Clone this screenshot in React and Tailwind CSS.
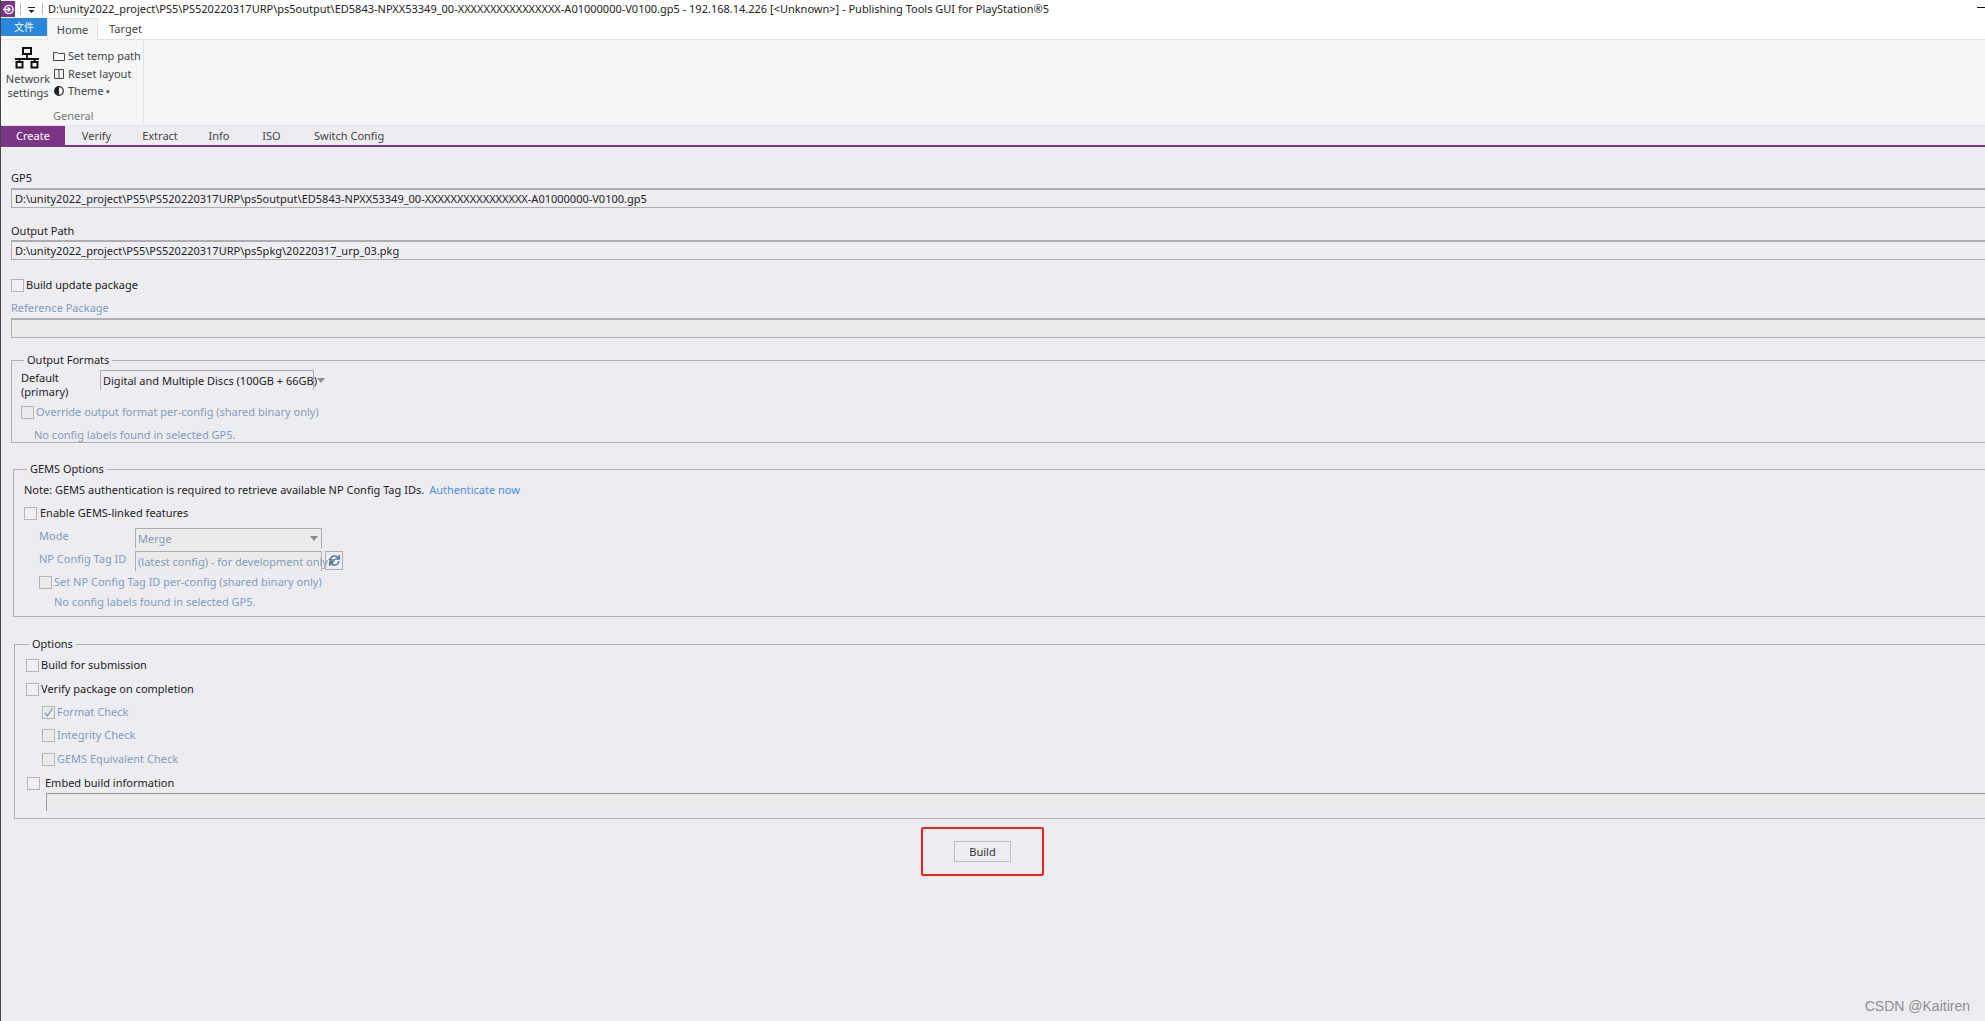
import React from "react";
import { FaSync } from "react-icons/fa";

const font = { };
const dim = "text-[#7f9cc0]";

function Check({ label, checked, disabled, className = "", gap = "gap-[2px]" }) {
  return (
    <div className={`flex items-center h-[14px] ${gap} ${className}`}>
      <span className={`w-[13px] h-[13px] shrink-0 border flex items-center justify-center ${disabled ? "border-[#b4b4b4] bg-[#ebebeb]" : "border-[#b4b4b4] bg-[#f0eff4]"}`}>
        {checked && (
          <svg viewBox="0 0 13 13" className="w-[13px] h-[13px]"><path d="M2.5 7 L5.2 10.5 L11 1.5" fill="none" stroke="#6f93c4" strokeWidth="1.4" /></svg>
        )}
      </span>
      <span className={disabled ? dim : "text-[#222]"}>{label}</span>
    </div>
  );
}

function PathBox({ value, disabled, className = "" }) {
  return (
    <div className={`h-[20px] -mr-[10px] border border-[#aeaeae] border-t-2 flex items-center pl-[3px] whitespace-nowrap ${disabled ? "bg-[#ebebeb] border-[#9a9a9a]" : "bg-[#eeedf2]"} ${className}`}>
      {value}
    </div>
  );
}

function Group({ title, className = "", children }) {
  return (
    <fieldset className={`border border-[#b0b0b0] -mr-[10px] min-w-0 ${className}`}>
      <legend className="ml-[3px] px-[3px] text-[#222] leading-[14px]">{title}</legend>
      {children}
    </fieldset>
  );
}

function Select({ value, disabled, className = "" }) {
  return (
    <div className={`h-[20px] border-t border-l border-r border-[#adadad] flex items-center justify-between pl-[2px] pr-[3px] ${disabled ? "bg-[#ebebeb] text-[#7f9cc0]" : "text-[#222]"} ${className}`}>
      <span className="whitespace-nowrap">{value}</span>
      <svg viewBox="0 0 8 5" className="w-[8px] h-[5px] shrink-0"><path d="M0 0H8L4 5Z" fill="#8d8d8d" /></svg>
    </div>
  );
}

function NetworkIcon() {
  return (
    <svg viewBox="0 0 26 22" className="w-[26px] h-[22px]">
      <rect x="9" y="1" width="8" height="6" fill="none" stroke="#111" strokeWidth="2" />
      <path d="M13 7V11M1 12H25M5.500 12V15M20.500 12V15" stroke="#111" strokeWidth="1.800" fill="none" />
      <rect x="2.500" y="15" width="6" height="5.500" fill="none" stroke="#111" strokeWidth="2" />
      <rect x="17.500" y="15" width="6" height="5.500" fill="none" stroke="#111" strokeWidth="2" />
    </svg>
  );
}

function RibbonItem({ icon, label }) {
  return (
    <div className="h-[20px] flex items-center gap-[3px] text-[#444]">
      <span className="w-[12px] h-[12px] flex items-center justify-center">{icon}</span>
      {label}
    </div>
  );
}

export default function App() {
  return (
    <div className="w-[1985px] h-[1021px] overflow-hidden bg-[#edecf1] border-l border-[#444] text-[11px] leading-[14px] flex flex-col relative" style={{ fontFamily: '"Noto Sans", "Noto Sans CJK SC", sans-serif' }}>
      {/* title bar */}
      <div className="h-[18px] bg-white flex items-center shrink-0">
        <div className="w-[14px] h-[16px] bg-[#7a3586] flex items-center justify-center">
          <svg viewBox="0 0 12 12" className="w-[11px] h-[11px]"><circle cx="6.500" cy="6" r="4.500" fill="none" stroke="#fff" strokeWidth="1.500" /><path d="M0 6H7M5 3.500L8 6L5 8.500" fill="none" stroke="#fff" strokeWidth="1.500" /></svg>
        </div>
        <span className="w-px h-[12px] bg-[#bbb] ml-[5px]" />
        <svg viewBox="0 0 7 6" className="w-[7px] h-[6px] ml-[7px] mt-[2px]"><path d="M0 0H7V1H0ZM0.500 3H6.500L3.500 6Z" fill="#222" /></svg>
        <span className="w-px h-[12px] bg-[#bbb] ml-[7px]" />
        <span className="ml-[5px] text-[#222] whitespace-nowrap">{"D:\\unity2022_project\\PS5\\PS520220317URP\\ps5output\\ED5843-NPXX53349_00-XXXXXXXXXXXXXXXX-A01000000-V0100.gp5 - 192.168.14.226 [<Unknown>] - Publishing Tools GUI for PlayStation®5"}</span>
        <span className="ml-auto w-[8px] h-px bg-[#111] -mt-[4px]" />
      </div>
      {/* ribbon tabs */}
      <div className="h-[22px] bg-white border-b border-[#e2e3e7] flex shrink-0">
        <div className="w-[46px] h-[18px] bg-[#2a88dc] text-white flex items-center justify-center" style={{ fontSize: 10 }}>文件</div>
        <div className="w-[51px] h-[22px] bg-[#f5f6f8] border-x border-t border-[#e2e3e7] flex items-center justify-center text-[#444]">Home</div>
        <div className="w-[55px] flex items-center justify-center text-[#444]">Target</div>
      </div>
      {/* ribbon body */}
      <div className="h-[86px] bg-[#f5f6f8] border-b border-[#e0e0e4] flex shrink-0">
        <div className="w-[143px] h-[83px] border-r border-[#e0e1e5] flex pt-[7px]">
          <div className="w-[52px] flex flex-col items-center text-[#444]">
            <NetworkIcon />
            <div className="mt-[3px] text-center leading-[14px] ml-[2px]">Network<br />settings</div>
          </div>
          <div className="flex flex-col">
            <RibbonItem label="Set temp path" icon={<svg viewBox="0 0 12 10" className="w-[12px] h-[10px]"><path d="M.5 1.500H4.500L5.500 2.500H11.500V9.500H.5Z" fill="none" stroke="#444" /></svg>} />
            <RibbonItem label="Reset layout" icon={<svg viewBox="0 0 10 10" className="w-[10px] h-[10px]"><path d="M.5 .5H9.500V9.500H.5ZM5 .5V9.500" fill="none" stroke="#444" /></svg>} />
            <RibbonItem label={<span>Theme <span className="text-[7px] align-[1px]">▾</span></span>} icon={<svg viewBox="0 0 10 10" className="w-[10px] h-[10px]"><circle cx="5" cy="5" r="4.300" fill="none" stroke="#222" strokeWidth="1.200" /><path d="M5 .5A4.500 4.500 0 0 1 5 9.500Z" fill="#222" transform="matrix(-1 0 0 1 10 0)" /></svg>} />
            <div className="text-[#777] mt-[9px]">General</div>
          </div>
        </div>
      </div>
      {/* tab strip */}
      <div className="h-[21px] border-b-2 border-[#7a3586] flex text-[#444] shrink-0">
        <div className="w-[64px] bg-[#7a3586] text-white flex items-center justify-center">Create</div>
        <div className="ml-[18px] w-[27px] flex items-center justify-center">Verify</div>
        <div className="ml-[34px] w-[32px] flex items-center justify-center">Extract</div>
        <div className="ml-[34px] w-[18px] flex items-center justify-center">Info</div>
        <div className="ml-[35px] w-[17px] flex items-center justify-center">ISO</div>
        <div className="ml-[34px] whitespace-nowrap flex items-center">Switch Config</div>
      </div>
      {/* content */}
      <div className="pl-[10px] pt-[24px] flex-1 min-h-0 text-[#222]">
        <div className="h-[14px]">GP5</div>
        <PathBox className="mt-[3px]" value={"D:\\unity2022_project\\PS5\\PS520220317URP\\ps5output\\ED5843-NPXX53349_00-XXXXXXXXXXXXXXXX-A01000000-V0100.gp5"} />
        <div className="h-[14px] mt-[16px]">Output Path</div>
        <PathBox className="mt-[2px]" value={"D:\\unity2022_project\\PS5\\PS520220317URP\\ps5pkg\\20220317_urp_03.pkg"} />
        <Check className="mt-[18px]" label="Build update package" />
        <div className={`h-[14px] mt-[9px] ${dim}`}>Reference Package</div>
        <PathBox disabled className="mt-[3px]" value="" />

        <Group title="Output Formats" className="mt-[15px] h-[90px] pl-[9px]">
          <div className="flex mt-[3px]">
            <div className="w-[79px] pt-[1px]">Default (primary)</div>
            <Select className="w-[214px]" value="Digital and Multiple Discs (100GB + 66GB)" />
          </div>
          <Check disabled className="mt-[6px]" label="Override output format per-config (shared binary only)" />
          <div className={`${dim} ml-[13px] mt-[9px]`}>No config labels found in selected GP5.</div>
        </Group>

        <Group title="GEMS Options" className="mt-[19px] !ml-[2px] h-[155px] pl-[10px]">
          <div className="mt-[7px] flex gap-[5px] whitespace-nowrap">
            <span>Note: GEMS authentication is required to retrieve available NP Config Tag IDs.</span>
            <span className="text-[#4a8fdc]">Authenticate now</span>
          </div>
          <Check className="mt-[9px]" label="Enable GEMS-linked features" gap="gap-[3px]" />
          <div className="flex ml-[15px] mt-[8px] items-start">
            <div className={`${dim} w-[96px] pt-[1px]`}>Mode</div>
            <Select disabled className="w-[187px]" value="Merge" />
          </div>
          <div className="flex ml-[15px] mt-[3px] items-start">
            <div className={`${dim} w-[96px] pt-[1px]`}>NP Config Tag ID</div>
            <Select disabled className="w-[187px]" value="(latest config) - for development only" />
            <div className="ml-[3px] w-[18px] h-[19px] border border-[#aeaeae] flex items-center justify-center">
              <FaSync className="w-[11px] h-[11px] text-[#53779f]" />
            </div>
          </div>
          <Check disabled className="ml-[15px] mt-[4px]" label="Set NP Config Tag ID per-config (shared binary only)" />
          <div className={`${dim} ml-[30px] mt-[6px]`}>No config labels found in selected GP5.</div>
        </Group>

        <Group title="Options" className="mt-[20px] !ml-[3px] h-[182px] pl-[11px]">
          <Check className="mt-[7px]" label="Build for submission" />
          <Check className="mt-[10px]" label="Verify package on completion" />
          <div className="ml-[16px]">
            <Check disabled checked className="mt-[9px]" label="Format Check" />
            <Check disabled className="mt-[9px]" label="Integrity Check" />
            <Check disabled className="mt-[10px]" label="GEMS Equivalent Check" />
          </div>
          <Check className="mt-[10px] ml-[1px]" label="Embed build information" gap="gap-[5px]" />
          <div className="ml-[20px] mt-[3px] h-[18px] bg-[#ebebeb] border-t border-l border-[#9a9a9a]" />
        </Group>

        <div className="flex justify-center mt-[8px] ml-[-1px] pr-[0px]">
          <div className="w-[123px] h-[49px] border-[2px] border-[#f5201e] rounded-[2px] flex items-center justify-center -ml-[0px] translate-x-[-15px]">
            <div className="w-[57px] h-[21px] border border-[#c0c0c0] flex items-center justify-center text-[#333]">Build</div>
          </div>
        </div>
      </div>
      <div className="absolute right-[15px] bottom-[7px] text-[14px] leading-[16px] text-[#8f8f8f]" style={{ fontFamily: '"Liberation Sans", sans-serif' }}>CSDN @Kaitiren</div>
    </div>
  );
}
